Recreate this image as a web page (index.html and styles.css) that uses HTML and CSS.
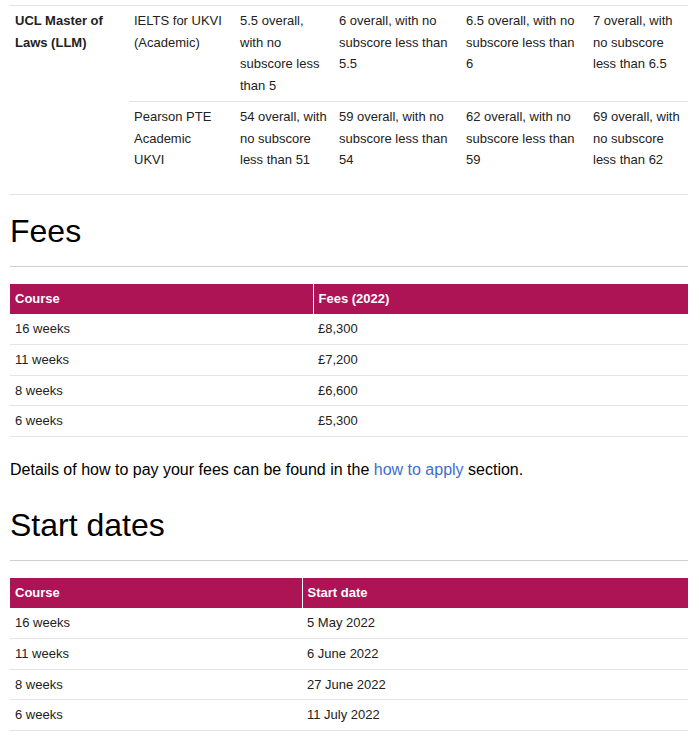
FILE: index.html
```html
<!DOCTYPE html>
<html lang="en">
<head>
<meta charset="utf-8">
<title>UCL LLM Pre-sessional</title>
<link rel="stylesheet" href="styles.css">
</head>
<body>
<div class="page">
  <table class="req">
    <colgroup>
      <col class="rc1"><col class="rc2"><col class="rc3"><col class="rc4"><col class="rc5"><col class="rc6">
    </colgroup>
    <tbody>
      <tr class="r1">
        <th rowspan="2" class="prog">UCL Master of Laws (LLM)</th>
        <td>IELTS for UKVI (Academic)</td>
        <td>5.5 overall, with no subscore less than 5</td>
        <td>6 overall, with no subscore less than 5.5</td>
        <td>6.5 overall, with no subscore less than 6</td>
        <td>7 overall, with no subscore less than 6.5</td>
      </tr>
      <tr class="r2">
        <td>Pearson PTE Academic<br>UKVI</td>
        <td>54 overall, with no subscore less than 51</td>
        <td>59 overall, with no subscore less than 54</td>
        <td>62 overall, with no subscore less than 59</td>
        <td>69 overall, with no subscore less than 62</td>
      </tr>
    </tbody>
  </table>

  <h2 class="heading first">Fees</h2>
  <table class="data">
    <colgroup><col class="fees-c1"><col></colgroup>
    <thead>
      <tr><th>Course</th><th>Fees (2022)</th></tr>
    </thead>
    <tbody>
      <tr><td>16 weeks</td><td>£8,300</td></tr>
      <tr><td>11 weeks</td><td>£7,200</td></tr>
      <tr><td>8 weeks</td><td>£6,600</td></tr>
      <tr><td>6 weeks</td><td>£5,300</td></tr>
    </tbody>
  </table>

  <p class="note">Details of how to pay your fees can be found in the <a href="#">how to apply</a> section.</p>

  <h2 class="heading">Start dates</h2>
  <table class="data">
    <colgroup><col class="dates-c1"><col></colgroup>
    <thead>
      <tr><th>Course</th><th>Start date</th></tr>
    </thead>
    <tbody>
      <tr><td>16 weeks</td><td>5 May 2022</td></tr>
      <tr><td>11 weeks</td><td>6 June 2022</td></tr>
      <tr><td>8 weeks</td><td>27 June 2022</td></tr>
      <tr><td>6 weeks</td><td>11 July 2022</td></tr>
    </tbody>
  </table>
</div>
</body>
</html>
```

FILE: styles.css
```css
html, body {
  margin: 0;
  padding: 0;
  background: #fff;
}

body {
  font-family: "Liberation Sans", Arial, sans-serif;
  color: #000;
}

.page {
  padding: 5px 12px 0 10px;
}

/* Entry requirements table */
.req {
  width: 678px;
  table-layout: fixed;
  border-collapse: collapse;
  border-top: 1px solid #e4e4e4;
  font-size: 13px;
  line-height: 21.7px;
  color: #222;
}

.rc1 { width: 119px; }
.rc2 { width: 106px; }
.rc3 { width: 99px; }
.rc4 { width: 127px; }
.rc5 { width: 127px; }
.rc6 { width: 100px; }

.req th,
.req td {
  text-align: left;
  vertical-align: top;
  padding: 4px 5px 4px;
  border-bottom: 1px solid #e4e4e4;
}

.req .prog {
  font-weight: bold;
}

.req .r2 td {
  padding-bottom: 23px;
}

/* Section headings */
.heading {
  margin: 25px 0 17px;
  padding: 0 0 17px;
  font-size: 32px;
  line-height: 36px;
  font-weight: normal;
  color: #000;
  border-bottom: 1px solid #cfcfcf;
}

.heading.first {
  margin-top: 18px;
}

/* Data tables */
.data {
  width: 678px;
  table-layout: fixed;
  border-collapse: collapse;
  font-size: 13px;
  line-height: 21.8px;
  color: #222;
}

.fees-c1 { width: 303px; }
.dates-c1 { width: 292px; }

.data th {
  background: #ac1456;
  color: #fff;
  font-weight: bold;
  text-align: left;
  padding: 4px 5px 4.2px;
}

.data th + th {
  border-left: 1px solid #fff;
}

.data td {
  padding: 4px 5px;
  border-bottom: 1px solid #e4e4e4;
}

.note {
  margin: 21px 0 0;
  font-size: 16px;
  line-height: 24px;
  color: #000;
}

.note a {
  color: #3c6fd0;
  text-decoration: none;
}
```
